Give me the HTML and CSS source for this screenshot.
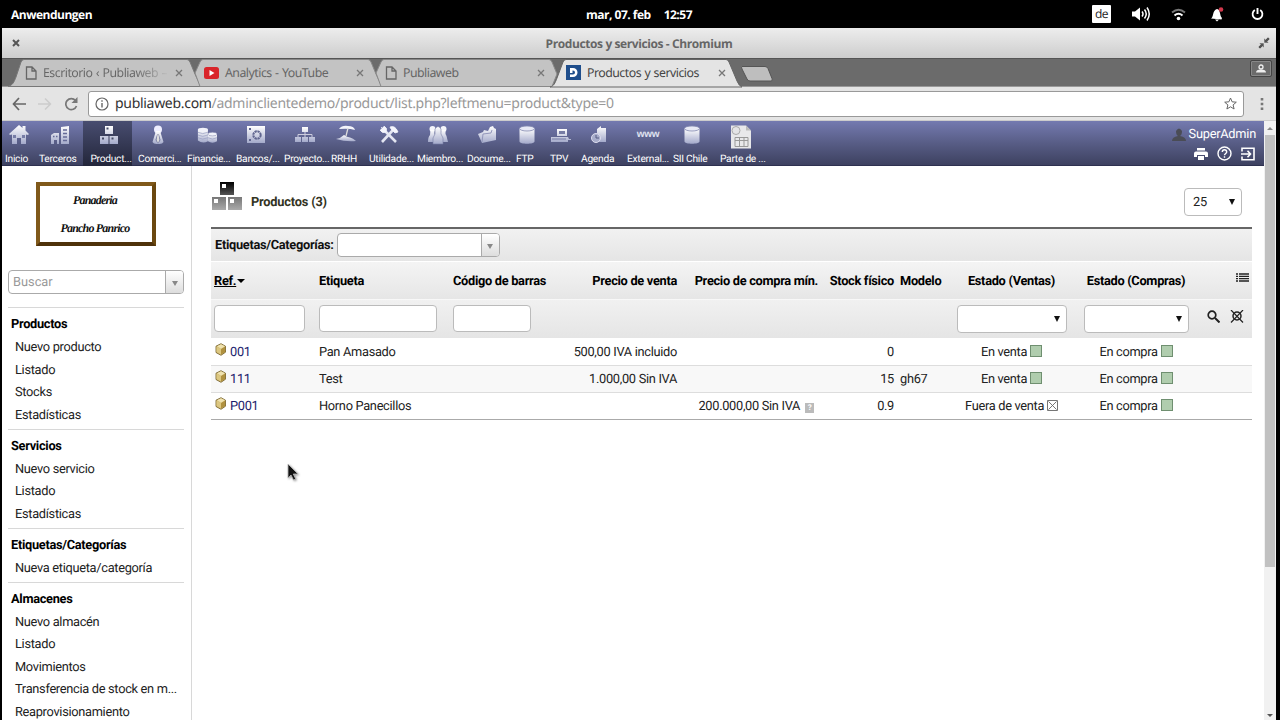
FILE: index.html
```html
<!DOCTYPE html>
<html lang="es">
<head>
    <meta charset="UTF-8">
    <title>Productos y servicios</title>
    <link rel="stylesheet" href="styles.css">
</head>
<body>
    <!-- shared symbols -->
    <svg class="defs" width="0" height="0">
        <defs>
            <linearGradient id="silver" x1="0" y1="0" x2="0" y2="1"><stop offset="0" stop-color="#fff"/><stop offset="1" stop-color="#a3a9ca"/></linearGradient>
            <linearGradient id="grey" x1="0" y1="0" x2="0" y2="1"><stop offset="0" stop-color="#777"/><stop offset="1" stop-color="#aaa"/></linearGradient>
            <linearGradient id="dark" x1="0" y1="0" x2="0" y2="1"><stop offset="0" stop-color="#000"/><stop offset="1" stop-color="#555"/></linearGradient>
        </defs>
        <symbol id="page" viewBox="0 0 12 14"><path d="M1.500 1h5.500l4 4v8h-9.500zM7 1v4h4" fill="none" stroke="#666" stroke-width="1.300"/></symbol>
        <symbol id="cross" viewBox="0 0 8 8"><path d="M1 1l6 6M7 1l-6 6" stroke="#777" stroke-width="1.300"/></symbol>
        <symbol id="db" viewBox="0 0 20 20"><path d="M2.500 3.500v13c0 3 15 3 15 0v-13z" fill="url(#silver)"/><ellipse cx="10" cy="3.500" rx="7.500" ry="2.500" fill="#e8eaf5" stroke="#8389b0" stroke-width=".8"/></symbol>
        <symbol id="cube" viewBox="0 0 12 13"><path d="M6 .7l4.500 2.500v6L6 12.300 1 9.500V3.200z" fill="#cfb668" stroke="#6b5520" stroke-width=".8"/><path d="M1.500 3.500L6 6v5.500L1.500 9z" fill="#dcc781"/><path d="M6 6l4.200-2.500V9L6 11.600z" fill="#b0913f"/><path d="M6 1.300l4 2-4 2.500-4-2.500z" fill="#efe2b0"/></symbol>
    </svg>

    <div class="panel">
        <span class="panel-apps">Anwendungen</span>
        <span class="panel-clock"><span>mar, 07. feb</span><span>12:57</span></span>
        <span class="panel-tray">
            <span class="lang">de</span>
            <svg class="volume" width="20" height="16" viewBox="0 0 20 16"><path d="M1 5.500h3l5-4v13l-5-4H1z" fill="#fff"/><path d="M11 5.500q2 2.500 0 5M13.500 3.500q3.500 4.500 0 9M16 1.500q4.500 6.500 0 13" fill="none" stroke="#fff" stroke-width="1.500"/></svg>
            <svg class="wifi" width="15" height="13" viewBox="0 0 15 13"><path d="M1 4.500q6.500-5.500 13 0" fill="none" stroke="#777" stroke-width="1.800"/><path d="M3.500 7.500q4-3.500 8 0" fill="none" stroke="#fff" stroke-width="2"/><circle cx="7.500" cy="10.500" r="1.800" fill="#fff"/></svg>
            <svg class="bell" width="14" height="16" viewBox="0 0 14 16"><path d="M1 12.500c3-1.500 1-8 6-9.500 4 1 2.500 7 5 9l-.5 1.500z" fill="#fff"/><path d="M5 13.500h4l-2 2z" fill="#fff"/><circle cx="11" cy="3.500" r="2.300" fill="#d2384c"/></svg>
            <svg class="power" width="13" height="14" viewBox="0 0 13 14"><path d="M3.800 3a4.900 4.900 0 1 0 5.400 0" fill="none" stroke="#fff" stroke-width="1.800"/><path d="M6.500 1v6" stroke="#fff" stroke-width="1.900"/></svg>
        </span>
    </div>

    <div class="window">
        <div class="titlebar">
            <svg width="8" height="8" viewBox="0 0 8 8"><path d="M1 1l6 6M7 1l-6 6" stroke="#555" stroke-width="2"/></svg>
            <span>Productos y servicios - Chromium</span>
            <svg width="12" height="12" viewBox="0 0 12 12"><path d="M1 6h5v5L4.500 9.500 2 12 0 10l2.500-2.500zM11 6H6V1l1.500 1.500L10 0l2 2-2.500 2.500z" fill="#555" stroke="#ddd" stroke-width=".6"/></svg>
        </div>

        <div class="tabs">
            <div class="tab">
                <svg class="tab-bg" viewBox="0 0 194 28"><path d="M0 27.500C5 26 6 23 8 18L13 3q1-2.500 3-2.500h163q2 0 3 2.500l5 12 6 12.500z" fill="#c3c3c3" stroke="#777"/></svg>
                <svg width="12" height="14"><use href="#page"/></svg>
                <span class="tab-title faded">Escritorio ‹ Publiaweb –</span>
                <svg width="8" height="8"><use href="#cross"/></svg>
            </div>
            <div class="tab">
                <svg class="tab-bg" viewBox="0 0 194 28"><path d="M6 14L11 3q1-2.500 3-2.500h165q2 0 3 2.500l5 12 6 12.500H11z" fill="#c3c3c3" stroke="#888"/></svg>
                <svg width="15" height="12" viewBox="0 0 15 12"><rect width="15" height="12" rx="2.500" fill="#d9252a"/><path d="M5.500 3v6l5-3z" fill="#fff"/></svg>
                <span class="tab-title">Analytics - YouTube</span>
                <svg width="8" height="8"><use href="#cross"/></svg>
            </div>
            <div class="tab">
                <svg class="tab-bg" viewBox="0 0 194 28"><path d="M6 14L11 3q1-2.500 3-2.500h165q2 0 3 2.500l5 12-5 12.500H11z" fill="#c3c3c3" stroke="#888"/></svg>
                <svg width="12" height="14"><use href="#page"/></svg>
                <span class="tab-title">Publiaweb</span>
                <svg width="8" height="8"><use href="#cross"/></svg>
            </div>
            <div class="tab active">
                <svg class="tab-bg" viewBox="0 0 194 28"><path d="M-1 28c4-1 5-4 7-9L12 3q1-2.500 3-2.500h160q2 0 3 2.500l8 19q2 5 5 6z" fill="#e4e4e4" stroke="#666"/></svg>
                <svg width="15" height="15" viewBox="0 0 15 15"><rect width="15" height="15" fill="#1f4e8c"/><path d="M4 3h3a4.500 4.500 0 0 1 0 9H4V9.500h3a2 2 0 0 0 0-4h-.500V8H4z" fill="#fff"/></svg>
                <span class="tab-title">Productos y servicios</span>
                <svg width="8" height="8"><use href="#cross"/></svg>
            </div>
            <svg class="newtab" width="32" height="16" viewBox="0 0 32 16"><path d="M1 .5h23q2 0 3 2l4 10q1 2.500-1 2.500H9q-2 0-3-2L1 3q-1-2.500 0-2.500z" fill="#bebebe" stroke="#555"/></svg>
            <span class="profile"><svg width="10" height="9" viewBox="0 0 10 9"><circle cx="5" cy="3" r="2" fill="none" stroke="#eee" stroke-width="1.300"/><path d="M0 8.500q0-3 5-3t5 3z" fill="#eee"/></svg></span>
        </div>

        <div class="toolbar">
            <svg width="14" height="14" viewBox="0 0 14 14"><path d="M14 7H1.500M7 1L1.500 7 7 13" fill="none" stroke="#666" stroke-width="1.700"/></svg>
            <svg width="14" height="14" viewBox="0 0 14 14"><path d="M0 7h12M7 1.500L12.500 7 7 12.500" fill="none" stroke="#ccc" stroke-width="1.500"/></svg>
            <svg width="14" height="14" viewBox="0 0 14 14"><path d="M11.500 3.500A5.500 5.500 0 1 0 12.500 9" fill="none" stroke="#777" stroke-width="1.700"/><path d="M13.500 0v6h-6z" fill="#777"/></svg>
            <div class="urlbar">
                <svg width="14" height="14" viewBox="0 0 14 14"><circle cx="7" cy="7" r="6" fill="none" stroke="#666" stroke-width="1.200"/><path d="M7 6v4.500M7 3.300v1.500" stroke="#666" stroke-width="1.400"/></svg>
                <span class="url"><b>publiaweb.com</b>/adminclientedemo/product/list.php?leftmenu=product&amp;type=0</span>
                <svg width="13" height="13" viewBox="0 0 13 13"><path d="M6.500 1l1.600 3.800 4.200.4-3.200 2.700 1 4.100-3.600-2.200L2.900 12l1-4.100L.7 5.200l4.200-.4z" fill="none" stroke="#666"/></svg>
            </div>
            <svg width="4" height="14" viewBox="0 0 4 14"><path d="M.7 1h2.600v2.600H.7zM.7 5.700h2.600v2.600H.7zM.7 10.400h2.600V13H.7z" fill="#777"/></svg>
        </div>

        <div class="page">
            <div class="view">
                <div class="topmenu">
                    <div class="item"><svg viewBox="0 0 20 20"><path d="M10 0l3.500 3V1h3v4.500L20 9l-1 1-2-.5V19h-5v-6H8v6H3V9.500L1 10 0 9z" fill="url(#silver)"/><path d="M4 10h3v3H4zM13 10h3v3h-3z" fill="#777da6"/></svg><span>Inicio</span></div>
                    <div class="item"><svg viewBox="0 0 20 20"><path d="M11 2l8-1v18h-8zM1 10l3-2h5v11H7v-4H4v4H1z" fill="url(#silver)"/><path d="M13 5h4M13 8.500h4M13 12h4M13 15.500h4M3 11.500h1.500M6 11.500h1.500" stroke="#656b98" stroke-width="1.500"/></svg><span>Terceros</span></div>
                    <div class="item active"><svg viewBox="0 0 20 20"><path d="M6 1h8v8H6zM1 11h8.500v8H1zM10.500 11H19v8h-8.500z" fill="url(#silver)"/><path d="M7.500 2.500h2v2h-2zM3 12.500h2v2H3zM12.500 12.500h2v2h-2z" fill="#444b66"/></svg><span>Product...</span></div>
                    <div class="item"><svg viewBox="0 0 20 20"><circle cx="10" cy="4.500" r="4" fill="#eef"/><path d="M8 6h4l1 3 2.500 8q-1 2-4 2h-3q-3 0-4-2L7 9z" fill="url(#silver)"/><path d="M9.200 9h1.600l1.700 6-2.500 3.500L7.500 15z" fill="#6b709a"/><path d="M9.500 9h1l1 6-1.500 3L8.500 15z" fill="#ddd"/></svg><span>Comerci...</span></div>
                    <div class="item"><svg viewBox="0 0 22 20"><path d="M1 4v12q5 4 11 1V4z" fill="url(#silver)"/><ellipse cx="6.500" cy="4" rx="5.500" ry="2" fill="#f1f2fa"/><path d="M12 9v8q5 3 10 0V9z" fill="url(#silver)"/><ellipse cx="17" cy="9" rx="5" ry="2" fill="#f1f2fa" stroke="#8489ae" stroke-width=".6"/><path d="M1 7q5 3 11 0M1 10q5 3 11 0M1 13q5 3 11 0M12 13q5 3 10 0" fill="none" stroke="#9ba0c2" stroke-width=".8"/></svg><span>Financie...</span></div>
                    <div class="item"><svg viewBox="0 0 20 20"><path d="M1 1h18v17H1z" fill="url(#silver)"/><circle cx="11" cy="10" r="3.700" fill="none" stroke="#60668f" stroke-width="2" stroke-dasharray="2.300 .6"/><path d="M3 3h2v2H3zM3 14h2v2H3z" fill="#60668f"/></svg><span>Bancos/...</span></div>
                    <div class="item"><svg viewBox="0 0 20 20"><path d="M7 2h6v5H7zM0 12h6v5H0zM7 12h6v5H7zM14 12h6v5h-6z" fill="url(#silver)"/><path d="M10 7v5M3 12V9.500h14V12" fill="none" stroke="#ccd"/></svg><span>Proyecto...</span></div>
                    <div class="item short"><svg viewBox="0 0 20 20"><path d="M3 4q3-4 9-3 6 0 7 4-6-2-16-1z" fill="#f3f4fb"/><path d="M12 3l-2 8" stroke="#ddd" stroke-width="1.300"/><path d="M0 14q5-1 8-4 3 2 6 2.500t6 3.500q-10 1-20-2z" fill="url(#silver)"/></svg><span>RRHH</span></div>
                    <div class="item"><svg viewBox="0 0 20 20"><path d="M3 17L14 5M6 6l11 11" stroke="#e3e5f1" stroke-width="2.600"/><path d="M2 2l3 3M5 1q4 2 2 6-4 2-6-2M11 2q5-2 8 5l-3 1-4-4z" fill="#f4f5fc" stroke="#f4f5fc" stroke-width=".8"/></svg><span>Utilidade...</span></div>
                    <div class="item"><svg viewBox="0 0 20 20"><circle cx="4.500" cy="4" r="3" fill="#f4f5fb"/><circle cx="15.500" cy="4" r="3" fill="#f4f5fb"/><path d="M2.500 5h4v4l1 2-1 6H0q0-5 2-7zM13.500 5h4v4l1 2 1.500 6h-6l-2-6z" fill="url(#silver)"/><path d="M7 4q3-5 6 0v5l2 4v6H5v-6l2-4z" fill="url(#silver)" stroke="#777da5" stroke-width=".6"/></svg><span>Miembro...</span></div>
                    <div class="item"><svg viewBox="0 0 20 20"><path d="M1 9l5-2 1-2 4 1 2-4 3-1 1 2 2 1v11L5 18z" fill="url(#silver)"/><path d="M5 17l1-8 8-1 1-3" fill="none" stroke="#8b90b5" stroke-width=".9"/></svg><span>Docume...</span></div>
                    <div class="item short"><svg><use href="#db"/></svg><span>FTP</span></div>
                    <div class="item short"><svg viewBox="0 0 20 20"><path d="M6 4h10v7H6zM0 12h17l1 2h2v1h-3v2H0z" fill="url(#silver)"/><path d="M8 6h6v3H8z" fill="#777da5"/><path d="M1 14h14" stroke="#777da5"/></svg><span>TPV</span></div>
                    <div class="item short"><svg viewBox="0 0 20 20"><path d="M7 4l4-3v2h5v14H7z" fill="url(#silver)"/><circle cx="6" cy="13" r="4.500" fill="#a8adcb" stroke="#dde" stroke-width="1"/><path d="M6 10v3h3" fill="none" stroke="#555b82"/></svg><span>Agenda</span></div>
                    <div class="item"><span class="www">www</span><span>External...</span></div>
                    <div class="item short"><svg><use href="#db"/></svg><span>SII Chile</span></div>
                    <div class="item"><svg class="tall" viewBox="0 0 22 24"><path d="M1 1h15l5 5v18H1z" fill="#e8e8ea"/><path d="M16 1v5h5" fill="#bbb"/><circle cx="6" cy="6" r="4" fill="#e4e4e6" stroke="#aaa"/><path d="M5 13h13v9H5zM9.500 13v9M14 13v9M5 16h13" fill="none" stroke="#999"/></svg><span>Parte de ...</span></div>
                    <div class="login">
                        <div><svg width="14" height="14" viewBox="0 0 14 14"><path d="M4 3q3-5 6 0 0 4-2 5 6 1 6 5H0q0-4 6-5-2-1-2-5z" fill="#4a4c55"/></svg>SuperAdmin</div>
                        <div class="login-icons">
                            <svg width="14" height="14" viewBox="0 0 14 14"><path d="M3 1h8v2.500H3zM2 4.500h10a2 2 0 0 1 2 2V10h-3V8H3v2H0V6.500a2 2 0 0 1 2-2zM4 9h6v4H4z" fill="#fff"/></svg>
                            <svg width="15" height="15" viewBox="0 0 15 15"><circle cx="7.500" cy="7.500" r="6.500" fill="none" stroke="#fff" stroke-width="1.400"/><path d="M5.300 6q0-2.200 2.200-2.200T9.700 6c0 1.500-2.200 1.600-2.200 3.300M7.500 10.300v1.500" fill="none" stroke="#fff" stroke-width="1.400"/></svg>
                            <svg width="14" height="14" viewBox="0 0 14 14"><path d="M1 4.500V1.200h12v11.600H1V9.500M0 7h9M6.500 3.800L9.500 7l-3 3.200" fill="none" stroke="#fff" stroke-width="1.600"/></svg>
                        </div>
                    </div>
                </div>

                <div class="columns">
                    <div class="sidebar">
                        <div class="company"><span>Panaderia</span><span>Pancho Panrico</span></div>
                        <div class="combo search"><span>Buscar</span><i></i></div>
                        <div class="block">
                            <h3>Productos</h3>
                            <a>Nuevo producto</a>
                            <a>Listado</a>
                            <a>Stocks</a>
                            <a>Estadísticas</a>
                        </div>
                        <div class="block">
                            <h3>Servicios</h3>
                            <a>Nuevo servicio</a>
                            <a>Listado</a>
                            <a>Estadísticas</a>
                        </div>
                        <div class="block">
                            <h3>Etiquetas/Categorías</h3>
                            <a>Nueva etiqueta/categoría</a>
                        </div>
                        <div class="block">
                            <h3>Almacenes</h3>
                            <a>Nuevo almacén</a>
                            <a>Listado</a>
                            <a>Movimientos</a>
                            <a>Transferencia de stock en m...</a>
                            <a>Reaprovisionamiento</a>
                        </div>
                    </div>

                    <div class="content">
                        <div class="heading">
                            <svg width="30" height="29" viewBox="0 0 30 29"><path d="M8 0h14v13H8z" fill="url(#dark)"/><path d="M0 15h14v13H0zM16 15h14v13H16z" fill="url(#grey)"/><path d="M10 2h4v4h-4zM2 17h4v4H2zM18 17h4v4h-4z" fill="#fff"/></svg>
                            <h1>Productos (3)</h1>
                            <span class="select limit">25</span>
                        </div>
                        <div class="catbar">Etiquetas/Categorías: <div class="combo"><span></span><i></i></div></div>
                        <table>
                            <colgroup><col class="c-ref"><col class="c-label"><col class="c-code"><col class="c-sell"><col class="c-buy"><col class="c-stock"><col class="c-model"><col class="c-sales"><col class="c-purch"><col></colgroup>
                            <tr class="titles">
                                <th><u>Ref.</u><i class="sort"></i></th><th>Etiqueta</th><th>Código de barras</th><th class="right">Precio de venta</th><th class="right">Precio de compra mín.</th><th class="right">Stock físico</th><th>Modelo</th><th class="center">Estado (Ventas)</th><th class="center">Estado (Compras)</th>
                                <th class="right"><svg class="list" width="13" height="9" viewBox="0 0 13 9"><path d="M0 1h2M0 3.300h2M0 5.700h2M0 8h2M3 1h10M3 3.300h10M3 5.700h10M3 8h10" stroke="#222" stroke-width="1.300"/></svg></th>
                            </tr>
                            <tr class="filters">
                                <td><span class="input w-ref"></span></td><td><span class="input w-label"></span></td><td><span class="input w-code"></span></td><td></td><td></td><td></td><td></td>
                                <td class="center"><span class="select w-sales"></span></td><td class="center"><span class="select w-purch"></span></td>
                                <td><div class="tools"><svg width="13" height="13" viewBox="0 0 13 13"><circle cx="5" cy="5" r="3.800" fill="none" stroke="#222" stroke-width="1.700"/><path d="M8 8l4.500 4.500" stroke="#222" stroke-width="2"/></svg><svg width="14" height="13" viewBox="0 0 14 13"><circle cx="7" cy="6" r="4" fill="none" stroke="#222" stroke-width="1.500"/><path d="M1 0l12 12.500M13 0L1 12.500" stroke="#222" stroke-width="1.200"/></svg></div></td>
                            </tr>
                            <tr>
                                <td><svg class="cube"><use href="#cube"/></svg><a>001</a></td><td>Pan Amasado</td><td></td><td class="right">500,00 IVA incluido</td><td></td><td class="right">0</td><td></td><td class="center">En venta <i class="on"></i></td><td class="center">En compra <i class="on"></i></td><td></td>
                            </tr>
                            <tr class="pair">
                                <td><svg class="cube"><use href="#cube"/></svg><a>111</a></td><td>Test</td><td></td><td class="right">1.000,00 Sin IVA</td><td></td><td class="right">15</td><td>gh67</td><td class="center">En venta <i class="on"></i></td><td class="center">En compra <i class="on"></i></td><td></td>
                            </tr>
                            <tr>
                                <td><svg class="cube"><use href="#cube"/></svg><a>P001</a></td><td>Horno Panecillos</td><td></td><td></td><td class="right">200.000,00 Sin IVA <span class="help">?</span></td><td class="right">0.9</td><td></td><td class="center">Fuera de venta <svg class="off" width="11" height="11" viewBox="0 0 11 11"><path d="M.5.500h10v10H.5zM1.500 1.500l8 8M9.500 1.500l-8 8" fill="#fff" stroke="#666" stroke-width=".9"/></svg></td><td class="center">En compra <i class="on"></i></td><td></td>
                            </tr>
                        </table>
                    </div>
                </div>
            </div>
            <div class="scrollbar"><i class="up"></i><span></span><i class="down"></i></div>
        </div>
    </div>

    <svg class="pointer" width="12" height="19" viewBox="0 0 12 19"><path d="M1 1v14l3-3 2.500 5 2.200-1-2.400-5H11z" fill="#111" stroke="#bbb" stroke-width=".8"/></svg>
</body>
</html>
```
FILE: styles.css
```css
* {
    box-sizing: border-box;
}
body {
    margin: 0;
    width: 1280px;
    height: 720px;
    overflow: hidden;
    background: #000;
    font-family: Roboto, sans-serif;
    font-size: 12.8px;
    letter-spacing: -0.3px;
    color: #222;
    text-rendering: geometricPrecision;
}
svg {
    flex: none;
}
.defs {
    position: absolute;
}

/* desktop panel */
.panel {
    display: grid;
    grid-template-columns: 1fr auto 1fr;
    align-items: center;
    height: 28px;
    padding: 0 16px 0 11px;
    color: #fff;
    font: bold 12px "Open Sans", sans-serif;
    letter-spacing: -0.5px;
}
.panel-clock {
    display: flex;
    gap: 13px;
    margin-right: -3px;
}
.panel-tray {
    display: flex;
    justify-content: flex-end;
    align-items: center;
}
.lang {
    width: 19px;
    height: 18px;
    background: #fff;
    color: #222;
    font-weight: normal;
    line-height: 17px;
    text-align: center;
    border-radius: 1px;
}
.volume { margin-left: 20px; }
.wifi { margin-left: 20px; }
.bell { margin-left: 24px; }
.power { margin-left: 27px; }

/* browser window */
.window {
    width: 1274px;
    height: 692px;
    margin-left: 2px;
    display: flex;
    flex-direction: column;
    background: #fff;
}
.titlebar {
    display: flex;
    justify-content: space-between;
    align-items: center;
    height: 31px;
    padding: 0 6px 0 10px;
    background: linear-gradient(#ededed, #cdcdcd);
    border-bottom: 1px solid #555;
    color: #666;
    font: bold 12px "Open Sans", sans-serif;
    letter-spacing: -0.4px;
}
.tabs {
    display: flex;
    height: 28px;
    padding-left: 6px;
    background: #6b6b6b;
    border-bottom: 1px solid #999;
    font: 12.3px "Noto Sans", sans-serif;
    letter-spacing: -0.5px;
    word-spacing: 0.7px;
    color: #666;
}
.tab {
    position: relative;
    display: flex;
    align-items: center;
    width: 181px;
    padding: 0 6px 0 15px;
}
.tab-bg {
    position: absolute;
    left: 0;
    top: 0;
    width: 194px;
    height: 28px;
    overflow: visible;
}
.tab > *:not(.tab-bg) {
    position: relative;
}
.tab-title {
    flex: 1;
    min-width: 0;
    margin-left: 6px;
    white-space: nowrap;
}
.faded {
    background: linear-gradient(90deg, #666 75%, #bbb);
    background-clip: text;
    color: transparent;
    margin-right: 8px;
}
.tab:first-child {
    padding-left: 17px;
}
.tab.active {
    z-index: 1;
    color: #444;
}
.newtab {
    margin: 7px 0 0 9px;
}
.profile {
    display: grid;
    place-items: center;
    width: 22px;
    height: 17px;
    margin: 1px 4px 0 auto;
    border: 1px solid #444;
    border-radius: 2px;
    box-shadow: inset 0 0 0 1px #888;
}
.toolbar {
    display: flex;
    align-items: center;
    gap: 12px;
    height: 34px;
    padding: 0 12px 0 10px;
    background: #e4e4e4;
    border-bottom: 1px solid #ccc;
}
.urlbar {
    flex: 1;
    display: flex;
    align-items: center;
    height: 26px;
    margin-right: 4px;
    margin-left: -2px;
    padding: 0 6px 0 6px;
    background: #fff;
    border: 1px solid #999;
    border-radius: 3px;
}
.url {
    flex: 1;
    margin-left: 6px;
    color: #999;
    font: 14px "Noto Sans", sans-serif;
    letter-spacing: -0.3px;
}
.url b {
    color: #333;
    font-weight: normal;
}

/* application */
.page {
    flex: 1;
    display: flex;
    min-height: 0;
}
.view {
    width: 1262px;
    display: flex;
    flex-direction: column;
}
.topmenu {
    display: grid;
    grid-template-columns: 34px 44px 55px 49px 49px 48px 47px 38px 48px 50px 49px 34px 31px 46px 46px 47px 46px 1fr;
    height: 45px;
    flex: none;
    padding-left: 3px;
    background: linear-gradient(#747ab0, #585d86 50%, #3d4160);
    border-bottom: 1px solid #2e3150;
    color: #fff;
    font-size: 10.2px;
    letter-spacing: -0.25px;
    white-space: nowrap;
}
.item {
    display: flex;
    flex-direction: column;
    align-items: center;
    justify-self: start;
    padding-top: 4px;
    line-height: 12px;
}
/* icons are wider than the shortest labels */
.item svg {
    width: 20px;
    height: 20px;
    margin: 0 -4px 9px;
    transform: translateX(-2px);
}
.item .tall {
    width: 22px;
    height: 25px;
    margin-top: -1px;
    margin-bottom: 5px;
}
.item:nth-child(-n+2) svg,
.item.short svg {
    transform: translateX(2px);
}
.item.active {
    width: 49px;
    padding-left: 7px;
    background: linear-gradient(#484d70, #23263a);
}
.www {
    height: 29px;
    font: bold 10px/19px "Liberation Sans", sans-serif;
    color: #dfe1ef;
}
.login {
    grid-column: 18;
    justify-self: end;
    padding: 6px 8px 0 0;
    font-size: 12.8px;
    line-height: 16px;
}
.login > div {
    display: flex;
    align-items: center;
    gap: 3px;
}
.login .login-icons {
    justify-content: flex-end;
    gap: 9px;
    margin: 3px 1px 0 0;
}
.columns {
    flex: 1;
    display: flex;
    min-height: 0;
}
.sidebar {
    width: 190px;
    padding: 16px 8px 0 6px;
    border-right: 1px solid #d8d8d8;
    overflow: hidden;
}
.company {
    display: flex;
    flex-direction: column;
    align-items: center;
    justify-content: center;
    gap: 11px;
    width: 120px;
    height: 64px;
    margin: 0 0 24px 28px;
    padding-right: 2px;
    border: 4px solid #6e4a10;
    border-color: #80591a #6b480f #4f320a #80591a;
    font: italic bold 12px/17px "Liberation Serif", serif;
    letter-spacing: -0.8px;
    color: #111;
}
.combo {
    display: inline-flex;
    width: 163px;
    height: 24px;
    border: 1px solid #aaa;
    border-radius: 4px;
    background: #fff;
    overflow: hidden;
}
.combo span {
    flex: 1;
}
.combo i {
    display: grid;
    place-items: center;
    width: 18px;
    border-left: 1px solid #aaa;
    background: linear-gradient(#fff, #ddd);
}
.combo i::after {
    content: "";
    margin-top: 3px;
    border: 3px solid transparent;
    border-top: 5px solid #888;
    border-bottom: 0;
}
.search {
    width: 176px;
    padding-left: 4px;
    line-height: 24px;
    letter-spacing: 0;
    color: #999;
    vertical-align: top;
    margin-bottom: 13px;
}
.block {
    width: 176px;
    padding: 5px 0 1.5px;
    border-top: 1px solid #d8d8d8;
}
.block h3 {
    margin: 0 0 0 3px;
    font-size: 12.8px;
    line-height: 24px;
    color: #000;
}
.block a {
    display: block;
    margin-left: 7px;
    line-height: 22.5px;
    white-space: nowrap;
}
.content {
    width: 1041px;
    margin-left: 19px;
}
.heading {
    display: flex;
    align-items: center;
    height: 63px;
    border-bottom: 2px solid #666;
    padding: 0 10px 0 1px;
}
.heading h1 {
    flex: 1;
    margin: 11px 0 0 9px;
    font-size: 12.8px;
    letter-spacing: -0.2px;
    color: #332;
}
.select, .input {
    display: inline-block;
    height: 28px;
    border: 1px solid #bbb;
    border-radius: 4px;
    background: #fff;
    vertical-align: middle;
}
.input {
    height: 27px;
}
.select {
    display: inline-flex;
    align-items: center;
    justify-content: flex-end;
    padding-right: 6px;
}
.select::after {
    content: "";
    border: 3px solid transparent;
    border-top: 6px solid #111;
    border-bottom: 0;
}
.limit {
    width: 58px;
    padding-left: 8px;
    justify-content: space-between;
    margin-top: 11px;
}
.catbar {
    display: flex;
    align-items: center;
    gap: 3px;
    height: 33px;
    padding-left: 4px;
    background: linear-gradient(#f1f1f1, #e5e5e5);
    border-bottom: 1px solid #fff;
    font-weight: bold;
    color: #111;
}
table {
    width: 1041px;
    table-layout: fixed;
    border-collapse: collapse;
    border-bottom: 1px solid #aaa;
}
td, th {
    height: 27px;
    padding: 2px 3px 0;
    text-align: left;
    white-space: nowrap;
    border-bottom: 1px solid #ddd;
}
tr:last-child td {
    border-bottom-color: #aaa;
}
th {
    color: #000;
}
.titles {
    background: linear-gradient(#f4f4f4, #e6e6e6);
}
.titles th {
    height: 37px;
    border-bottom: 1px solid #f8f8f8;
}
.filters {
    background: linear-gradient(#f1f1f1, #e5e5e5);
}
.filters td {
    height: 39px;
    padding-top: 0;
    border: 0;
}
.pair {
    background: #f8f8f8;
}
tr .right { text-align: right; }
tr .center { text-align: center; }
.c-ref { width: 105px; }
.c-label { width: 134px; }
.c-code { width: 120px; }
.c-sell { width: 110px; }
.c-buy { width: 141px; }
.c-stock { width: 76px; }
.c-model { width: 50px; }
.c-sales { width: 129px; }
.c-purch { width: 120px; }
.w-ref { width: 91px; }
.w-label { width: 118px; }
.w-code { width: 78px; }
.w-sales { width: 110px; }
.w-purch { width: 105px; }
td a {
    color: #1c1c6c;
}
.sort {
    display: inline-block;
    margin-left: 1px;
    vertical-align: middle;
    border: 4px solid transparent;
    border-top-color: #000;
    border-bottom: 0;
}
.list {
    margin-bottom: 3px;
}
.tools {
    display: flex;
    gap: 10px;
    padding: 0 0 4px 8px;
}
.cube {
    width: 12px;
    height: 13px;
    margin: -2px 3px 0 1px;
    vertical-align: 0;
}
.on {
    display: inline-block;
    width: 12px;
    height: 12px;
    background: #b0cdae;
    border: 1px solid #6f8f70;
    vertical-align: -1px;
}
.off {
    vertical-align: -1px;
}
.help {
    display: inline-block;
    width: 9px;
    height: 10px;
    margin: 0 4px 0 2px;
    background: #bbb;
    color: #fff;
    font: bold 8px/10px Roboto, sans-serif;
    text-align: center;
    vertical-align: 0;
}
.scrollbar {
    display: flex;
    flex-direction: column;
    align-items: center;
    width: 12px;
    background: #f1f1f1;
}
.scrollbar span {
    width: 10px;
    height: 432px;
    margin: 5px 0 auto;
    background: #c1c1c1;
}
.up, .down {
    border: 3px solid transparent;
}
.up {
    margin-top: 3px;
    border-bottom-color: #888;
}
.down {
    border-top-color: #555;
}
.pointer {
    position: absolute;
    left: 287px;
    top: 463px;
    filter: drop-shadow(1px 1px 1px #999);
}
```
